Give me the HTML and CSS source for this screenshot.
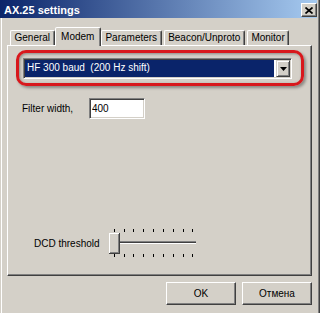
FILE: index.html
```html
<!DOCTYPE html>
<html lang="en">
<head>
    <meta charset="UTF-8">
    <meta name="viewport" content="width=device-width, initial-scale=1.0">
    <title>AX.25 settings</title>
    <link rel="stylesheet" href="styles.css">
</head>
<body>
    <div class="window">
        <!-- Title bar -->
        <div class="titlebar">
            <span class="title">AX.25 settings</span>
            <button class="close-btn" aria-label="Close">
                <svg width="8" height="7" viewBox="0 0 8 7"><path d="M0.5 0.5 L7.5 6.5 M7.5 0.5 L0.5 6.5" stroke="#000" stroke-width="1.7"/></svg>
            </button>
        </div>

        <!-- Tabs -->
        <div class="tabs">
            <div class="tab">General</div>
            <div class="tab active">Modem</div>
            <div class="tab">Parameters</div>
            <div class="tab">Beacon/Unproto</div>
            <div class="tab">Monitor</div>
        </div>

        <!-- Modem page -->
        <div class="panel">
            <div class="highlight">
                <div class="combo">
                    <span class="combo-value">HF 300 baud  (200 Hz shift)</span>
                    <span class="combo-arrow">
                        <svg width="7" height="4" viewBox="0 0 7 4"><polygon points="0,0 7,0 3.5,4" fill="#000"/></svg>
                    </span>
                </div>
            </div>

            <div class="field-row">
                <label for="filterWidth">Filter width,</label>
                <input type="text" id="filterWidth" value="400">
            </div>

            <div class="slider-row">
                <span class="slider-label">DCD threshold</span>
                <svg class="slider" width="90" height="29" viewBox="0 0 90 29">
                    <g fill="#000">
                        <rect x="6" y="0" width="1" height="3"/>
                        <rect x="16" y="0" width="1" height="3"/>
                        <rect x="25" y="0" width="1" height="3"/>
                        <rect x="35" y="0" width="1" height="3"/>
                        <rect x="45" y="0" width="1" height="3"/>
                        <rect x="55" y="0" width="1" height="3"/>
                        <rect x="65" y="0" width="1" height="3"/>
                        <rect x="75" y="0" width="1" height="3"/>
                        <rect x="84" y="0" width="1" height="3"/>
                        <rect x="6" y="25" width="1" height="3"/>
                        <rect x="16" y="25" width="1" height="3"/>
                        <rect x="25" y="25" width="1" height="3"/>
                        <rect x="35" y="25" width="1" height="3"/>
                        <rect x="45" y="25" width="1" height="3"/>
                        <rect x="55" y="25" width="1" height="3"/>
                        <rect x="65" y="25" width="1" height="3"/>
                        <rect x="75" y="25" width="1" height="3"/>
                        <rect x="84" y="25" width="1" height="3"/>
                    </g>
                    <!-- track -->
                    <rect x="2" y="12" width="86" height="1" fill="#808080"/>
                    <rect x="2" y="13" width="86" height="1" fill="#404040"/>
                    <rect x="2" y="14" width="86" height="1" fill="#fff"/>
                    <!-- thumb -->
                    <rect x="1" y="4" width="11" height="21" fill="#404040"/>
                    <rect x="1" y="4" width="10" height="20" fill="#fff"/>
                    <rect x="2" y="5" width="9" height="19" fill="#808080"/>
                    <rect x="2" y="5" width="8" height="18" fill="#d4d0c8"/>
                </svg>
            </div>
        </div>

        <!-- Dialog buttons -->
        <div class="buttons">
            <button>OK</button>
            <button>Отмена</button>
        </div>
    </div>
</body>
</html>
```

FILE: styles.css
```css
/* General Reset */
* {
    margin: 0;
    padding: 0;
    box-sizing: border-box;
}

body {
    font-family: 'Liberation Sans', Arial, sans-serif;
    font-size: 10px;
    color: #000;
    background-color: #d4d0c8; /* classic dialog grey */
}

/* Window frame */
.window {
    width: 320px;
    height: 313px;
    display: flex;
    flex-direction: column;
    overflow: hidden;
    box-shadow: inset 1px 0 #d4d0c8, inset 2px 0 #fff, inset -1px 0 #404040, inset -2px 0 #808080;
}

/* Title bar */
.titlebar {
    height: 18px;
    margin-right: 3px;
    padding-left: 4px;
    display: flex;
    justify-content: space-between;
    align-items: flex-start;
    background: linear-gradient(to right, #0a246a, #a6caf0);
}

.title {
    color: white;
    font-size: 11px;
    font-weight: bold;
    line-height: 15px;
    padding-top: 3px;
}

.close-btn {
    width: 16px;
    height: 14px;
    margin-top: 3px;
    display: flex;
    align-items: center;
    justify-content: center;
    background: #d4d0c8;
    border: 1px solid;
    border-color: #fff #404040 #404040 #fff;
    box-shadow: inset -1px -1px #808080;
}

/* Tabs */
.tabs {
    height: 27px;
    padding-left: 10px;
    display: flex;
    align-items: flex-end;
    gap: 2px;
}

.tab {
    height: 15px;
    padding: 0 3.5px;
    line-height: 14px;
    white-space: nowrap;
    border: 1px solid;
    border-bottom: none;
    border-color: #fff #404040 transparent #fff;
    border-radius: 2px 2px 0 0;
    box-shadow: inset -1px 0 #808080;
}

.tab.active {
    height: 19px;
    margin: 0 -2px -1px;
    padding: 0 5.5px;
    line-height: 17px;
    background: #d4d0c8;
    position: relative;
    z-index: 1;
}

/* Tab page */
.panel {
    width: 305px;
    height: 231px;
    margin-left: 7px;
    display: flex;
    flex-direction: column;
    border: 1px solid;
    border-color: #fff #404040 #404040 #fff;
    box-shadow: inset -1px -1px #808080;
}

/* Red marker round the combo */
.highlight {
    width: 288px;
    margin: 4px 0 0 8px;
    padding: 5px 9px 4px 4px;
    border: 3px solid #d8181c;
    border-radius: 10px;
    box-shadow: 2px 2px 3px rgba(0, 0, 0, 0.35), inset 1px 1px 3px rgba(0, 0, 0, 0.35);
}

.combo {
    height: 21px;
    padding: 1px;
    display: flex;
    gap: 2px;
    background: white;
    border: 1px solid;
    border-color: #808080 #fff #fff #808080;
    box-shadow: inset 1px 1px #404040, inset -1px -1px #d4d0c8;
}

.combo-value {
    flex: 1;
    padding: 0 2px 2px;
    line-height: 15px;
    color: white;
    background: #0a246a;
    white-space: pre;
}

.combo-arrow {
    width: 14px;
    display: flex;
    align-items: center;
    justify-content: center;
    background: #d4d0c8;
    border: 1px solid;
    border-color: #d4d0c8 #404040 #404040 #d4d0c8;
    box-shadow: inset 1px 1px #fff, inset -1px -1px #808080;
}

/* Filter width */
.field-row {
    margin: 12px 0 0 14px;
    display: flex;
    align-items: center;
}

.field-row label {
    width: 67px;
}

.field-row input {
    width: 56px;
    height: 21px;
    padding: 1px 2px;
    font: inherit;
    line-height: 15px;
    color: #000;
    background: white;
    outline: none;
    border: 1px solid;
    border-color: #808080 #fff #fff #808080;
    box-shadow: inset 1px 1px #404040, inset -1px -1px #d4d0c8;
}

/* DCD slider */
.slider-row {
    margin: auto 0 17px 26px;
    display: flex;
    align-items: center;
}

.slider-label {
    width: 74px;
}

.slider {
    display: block;
}

/* Dialog buttons */
.buttons {
    margin-top: 6px;
    padding-right: 8px;
    display: flex;
    justify-content: flex-end;
    gap: 6px;
}

.buttons button {
    width: 70px;
    height: 23px;
    font: inherit;
    color: #000;
    background: #d4d0c8;
    border: 1px solid;
    border-color: #fff #404040 #404040 #fff;
    box-shadow: inset -1px -1px #808080;
}
```
